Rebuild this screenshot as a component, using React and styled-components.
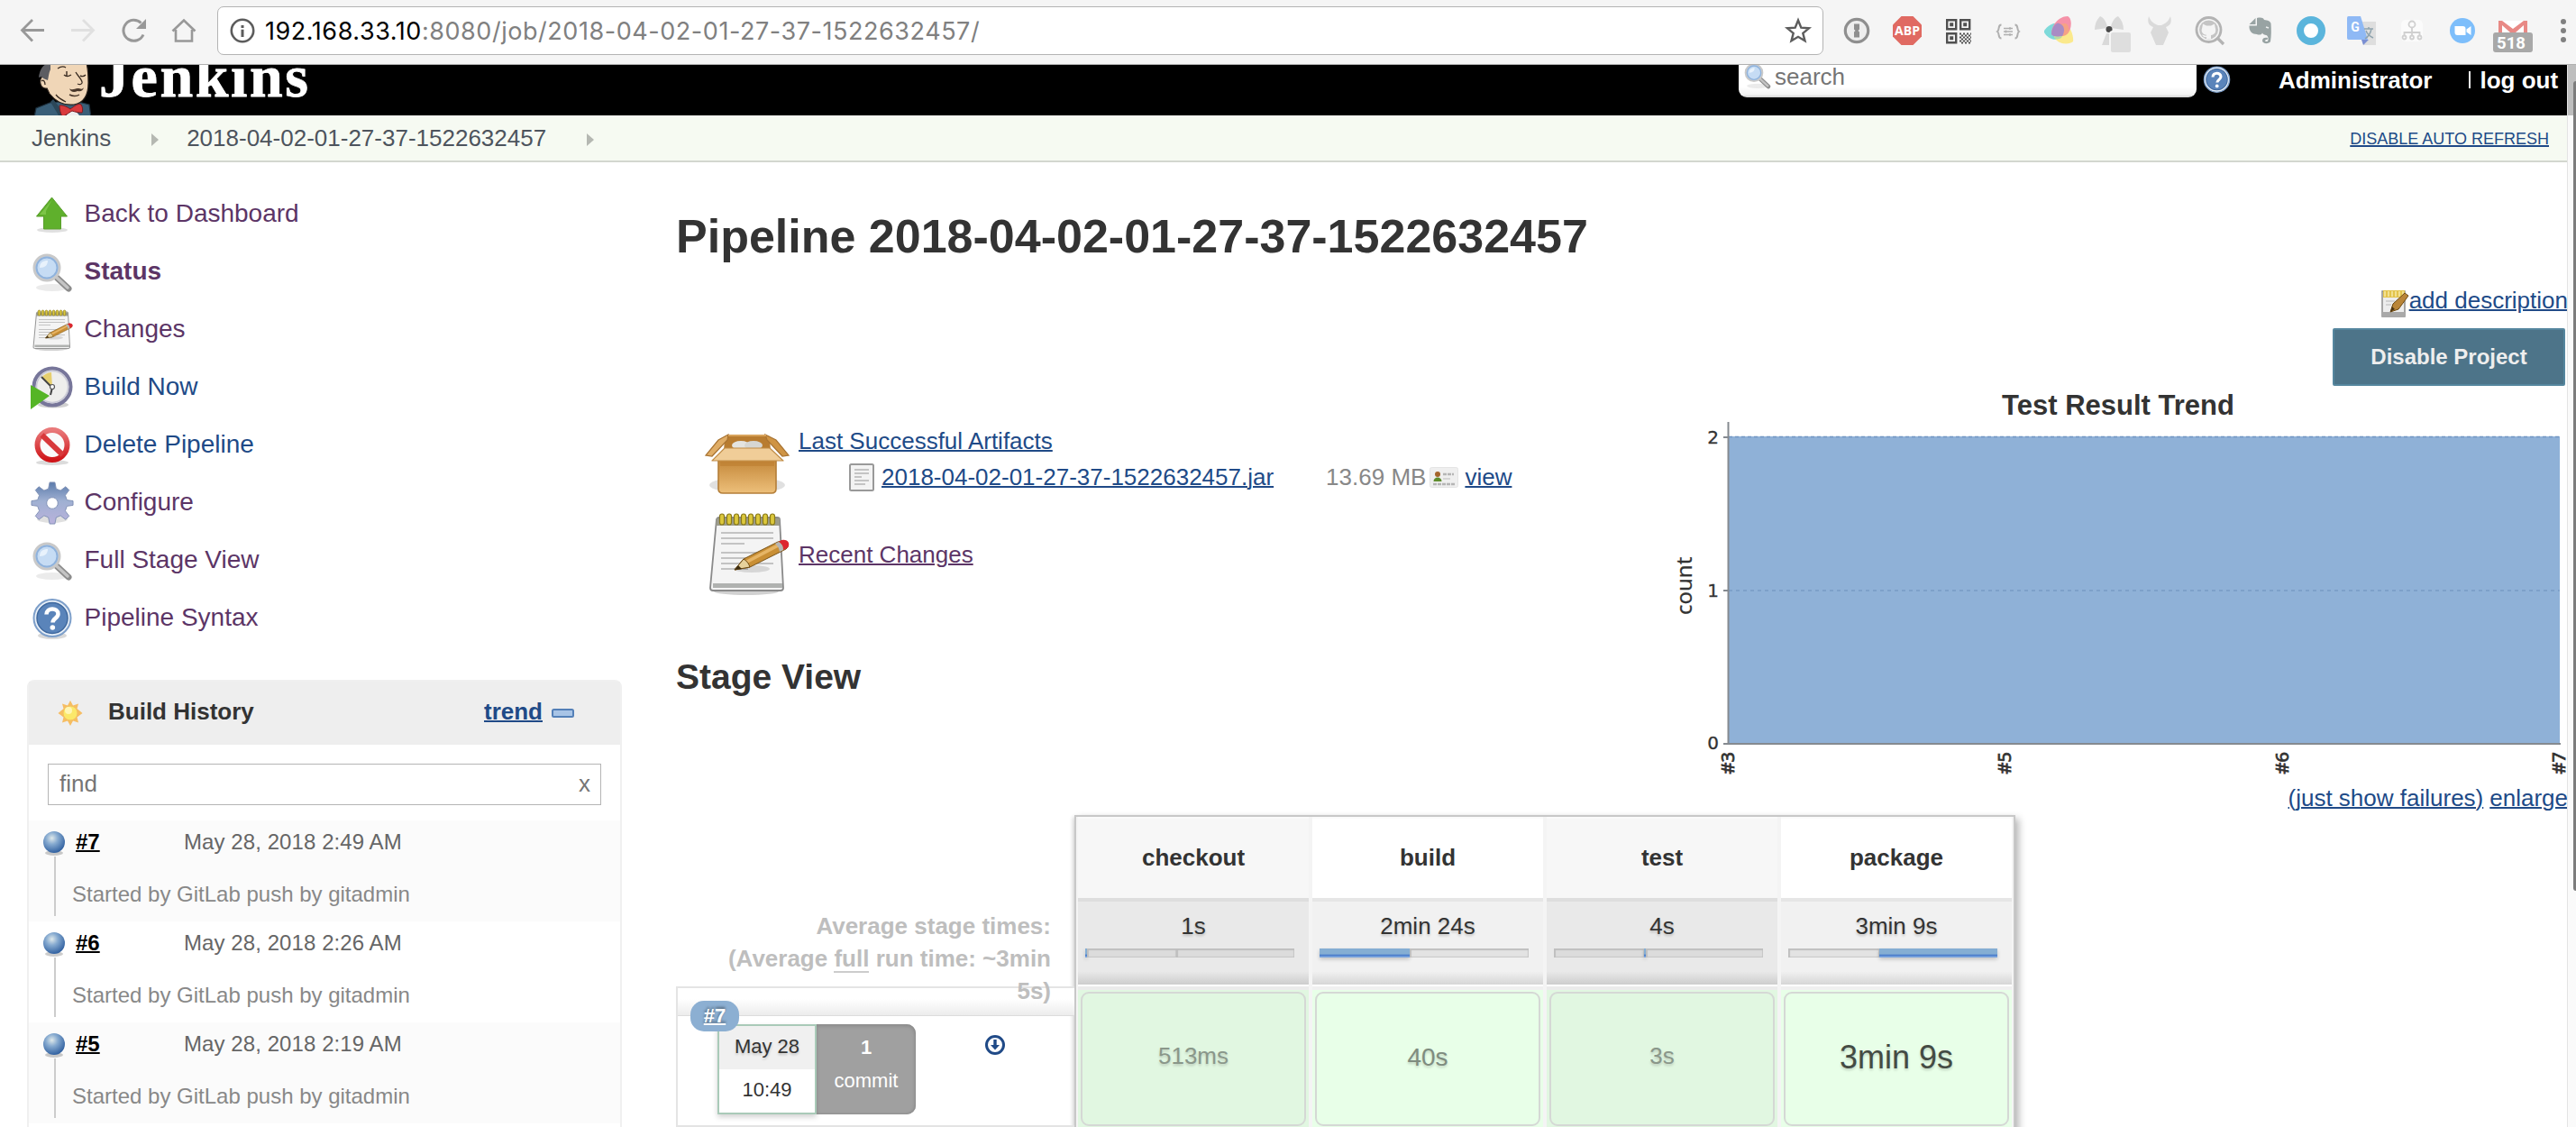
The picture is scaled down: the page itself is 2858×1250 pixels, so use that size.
import React from "react";
import styled, { createGlobalStyle } from "styled-components";

const GlobalStyle = createGlobalStyle`
  *, *::before, *::after { box-sizing: border-box; }
  html, body { margin: 0; padding: 0; background: #fff; overflow: hidden; }
  body { font-family: "Liberation Sans", Helvetica, Arial, sans-serif; font-size: 26px; color: #333; }
  svg { display: block; flex: none; overflow: visible; }
  h1, h2, p { margin: 0; }
`;

/* ---------- Browser chrome ---------- */

const Screen = styled.div`
  width: 2858px;
  height: 1250px;
  overflow: hidden;
  display: flex;
  flex-direction: column;
`;

const Toolbar = styled.div`
  flex: none;
  height: 72px;
  display: flex;
  align-items: flex-start;
  padding-left: 22px;
  background: #f5f5f5;
  border-bottom: 1px solid #b0b0b0;
`;

const NavButtons = styled.div`
  display: flex;
  gap: 28px;
  padding-top: 20px;
  margin-right: 23px;
`;

const Omnibox = styled.div`
  flex: none;
  width: 1782px;
  height: 54px;
  margin-top: 7px;
  padding: 0 12px 0 13px;
  display: flex;
  align-items: center;
  gap: 11px;
  background: #fff;
  border: 1px solid #b4b4b4;
  border-radius: 7px;
`;

const Url = styled.div`
  flex: 1;
  padding-top: 2px;
  font-family: Inter, Roboto, sans-serif;
  font-size: 27px;
  line-height: 36px;
  letter-spacing: 0.55px;
  color: #808080;
  white-space: nowrap;
  span { color: #000; }
`;

const Extensions = styled.div`
  flex: none;
  display: flex;
  gap: 24px;
  padding: 18px 0 0 21px;
`;

const Viewport = styled.div`
  flex: 1;
  min-height: 0;
  display: flex;
`;

const Page = styled.div`
  width: 2848px;
  height: 1178px;
  overflow: hidden;
`;

const ScrollTrack = styled.div`
  width: 10px;
  padding: 18px 0 0 6px;
  border-left: 1px solid #e4e4e4;
  background: linear-gradient(#bebebe 56px, #fafafa 56px);
`;

const ScrollThumb = styled.div`
  height: 898px;
  border-radius: 6px 0 0 6px;
  background: #7c7c7c;
`;

/* ---------- Jenkins header ---------- */

const Header = styled.header`
  height: 56px;
  overflow: hidden;
  display: flex;
  align-items: flex-start;
  padding-left: 30px;
  background: #000;
  color: #fff;
`;

const Brand = styled.div`
  width: 1819px;
  margin-top: -24px;
  font-family: "Liberation Serif", Georgia, serif;
  font-size: 66px;
  font-weight: bold;
  line-height: 74px;
  letter-spacing: 2.6px;
  -webkit-text-stroke: 0.8px #fff;
`;

const SearchBox = styled.div`
  width: 508px;
  height: 36px;
  padding-left: 5px;
  display: flex;
  gap: 3px;
  background: linear-gradient(#fff 24px, #f3f3f3 33px, #d9d9d9 35px);
  border-radius: 0 0 9px 9px;
  color: #757575;
  line-height: 26px;
  svg { margin-top: -4px; }
`;

const HeaderLink = styled.a`
  font-weight: bold;
  line-height: 34px;
  margin-left: ${(p) => p.$gap}px;
`;

const Divider = styled.i`
  width: 2px;
  height: 19px;
  margin: 7px 10px 0 41px;
  background: #eee;
`;

const Breadcrumbs = styled.nav`
  height: 52px;
  display: flex;
  align-items: center;
  padding: 0 20px 0 35px;
  background: #f6faf2;
  border-bottom: 2px solid #d3d7cf;
  color: #4d545d;
`;

const Crumb = styled.a`
  line-height: 48px;
`;

const CrumbArrow = styled.i`
  margin: 4px ${(p) => p.$right}px 0 45px;
  border: 7.5px solid transparent;
  border-left: 8px solid #b5b8b2;
  border-right: 0;
`;

const AutoRefresh = styled.a`
  margin-left: auto;
  padding-top: 3px;
  font-size: 18px;
  color: #204a87;
  text-decoration: underline;
  text-decoration-thickness: 2px;
`;

/* ---------- Side panel ---------- */

const Body = styled.div`
  display: flex;
`;

const SidePanel = styled.aside`
  width: 750px;
  padding: 34px 60px 0 30px;
`;

const Tasks = styled.div`
  display: flex;
  flex-direction: column;
  gap: 16px;
  padding-left: 4px;
`;

const Task = styled.a`
  height: 48px;
  display: flex;
  align-items: center;
  gap: 11.5px;
  font-size: 28px;
  line-height: 46px;
  color: ${(p) => (p.$visited ? "#5c3566" : "#204a87")};
  font-weight: ${(p) => (p.$active ? "bold" : "normal")};
  span { padding-bottom: 2px; }
`;

const HistoryPane = styled.section`
  width: 660px;
  margin-top: 44px;
  padding-bottom: 40px;
  border: 2px solid #f0f0f0;
  border-radius: 8px 8px 0 0;
`;

const HistoryHead = styled.div`
  height: 70px;
  display: flex;
  align-items: center;
  padding: 0 51px 0 30px;
  background: #eee;
  font-weight: bold;
  color: #333;
`;

const HistoryTitle = styled.span`
  flex: 1;
  padding: 0 0 3px 26px;
`;

const TrendLink = styled.a`
  margin-right: 10px;
  padding-bottom: 3px;
  color: #204a87;
  text-decoration: underline;
  text-decoration-thickness: 2px;
`;

const Finder = styled.div`
  height: 46px;
  margin: 21px 21px 17px;
  padding: 0 11px 0 12px;
  display: flex;
  justify-content: space-between;
  border: 1px solid #b5b5b5;
  color: #757575;
  line-height: 42px;
`;

const BuildRow = styled.div`
  height: 112px;
  display: grid;
  grid-template-columns: 34px 1fr;
  padding-left: 15px;
  background: ${(p) => (p.$shaded ? "#fbfbfb" : "#fff")};
  font-size: 24px;
`;

const BuildRail = styled.div`
  display: flex;
  flex-direction: column;
  padding: 10px 0 6px;
  i { flex: 1; width: 2px; margin-left: 13px; background: #ccc; }
`;

const BuildLine = styled.div`
  display: flex;
  height: 47px;
  line-height: 48px;
  color: #666;
`;

const BuildNumber = styled.a`
  width: 123px;
  padding-left: 3px;
  font-weight: bold;
  color: #000;
  text-decoration: underline;
  text-decoration-thickness: 2px;
`;

const BuildDate = styled.span`
  letter-spacing: 0.08px;
`;

const BuildCause = styled.p`
  margin: 12px 0 0 -1px;
  line-height: 46px;
  color: #888;
`;

/* ---------- Main panel ---------- */

const Main = styled.main`
  flex: 1;
  padding-top: 52px;
`;

const Title = styled.h1`
  font-size: 52px;
  line-height: 60px;
`;

const Summary = styled.div`
  height: 612px;
  display: flex;
`;

const SummaryLeft = styled.div`
  width: 1100px;
  padding-top: 174px;
`;

const SummaryRow = styled.div`
  display: flex;
  gap: 8px;
  height: 96px;
  margin: 0 0 4px 32px;
`;

const SummaryText = styled.div`
  line-height: 40px;
  padding-top: ${(p) => p.$top}px;
`;

const Link = styled.a`
  color: ${(p) => (p.$visited ? "#5c3566" : "#204a87")};
  text-decoration: underline;
  text-decoration-thickness: 2px;
`;

const FileRow = styled.div`
  display: flex;
  align-items: center;
  padding-left: 56px;
`;

const FileSize = styled.span`
  margin: 0 4px 0 58px;
  color: #888;
`;

const SectionTitle = styled.h2`
  margin-top: 67px;
  font-size: 39px;
  line-height: 44px;
`;

const Trend = styled.div`
  width: 1000px;
  margin-right: -2px;
  padding-top: 28px;
  display: flex;
  flex-direction: column;
`;

const DescriptionLink = styled.div`
  display: flex;
  justify-content: flex-end;
  height: 32px;
  line-height: 27px;
  padding-right: 1px;
  white-space: nowrap;
`;

const Button = styled.button`
  align-self: flex-end;
  width: 258px;
  height: 64px;
  margin: 12px 4px 0 0;
  padding: 0;
  background: #4d7489;
  border: 2px solid #55869e;
  border-radius: 2px;
  color: #eee;
  font: bold 24px "Liberation Sans", Arial, sans-serif;
`;

const TrendTitle = styled.div`
  margin: 4px 0 -1px;
  height: 36px;
  font-size: 31px;
  line-height: 36px;
  font-weight: bold;
  text-align: center;
`;

const TrendLinks = styled.div`
  display: flex;
  justify-content: flex-end;
  gap: 7px;
  padding-right: 1px;
  line-height: 30px;
`;

/* ---------- Stage view ---------- */

const StageView = styled.section`
  display: flex;
`;

const RunColumn = styled.div`
  width: 442px;
`;

const Averages = styled.div`
  position: relative;
  z-index: 1;
  height: 190px;
  padding: 105px 26px 0 0;
  text-align: right;
  font-weight: bold;
  line-height: 36px;
  color: #bebebe;
  span { display: block; white-space: nowrap; }
  u { text-decoration: none; border-bottom: 2px solid #ccc; display: inline-block; line-height: 28px; }
`;

const Run = styled.div`
  position: relative;
  height: 156px;
  border: 2px solid #e4e4e4;
  border-right: 0;
`;

const RunShade = styled.div`
  height: 31px;
  border-bottom: 1px solid #dcdcdc;
  background: linear-gradient(#fff 40%, #ececec);
`;

const RunBadge = styled.a`
  position: absolute;
  left: 14px;
  top: 14px;
  width: 54px;
  height: 34px;
  border-radius: 15px;
  background: #8cafd2;
  color: #fff;
  font-size: 22px;
  font-weight: bold;
  line-height: 33px;
  text-align: center;
  text-decoration: underline;
  text-decoration-thickness: 2px;
  text-shadow: 0 -2px 3px rgba(0, 0, 0, 0.4);
`;

const RunInfo = styled.div`
  display: flex;
  padding: 9px 0 0 44px;
  font-size: 22px;
`;

const RunDate = styled.div`
  width: 110px;
  height: 100px;
  border: 2px solid #a9cab8;
  box-shadow: 0 3px 6px rgba(0, 0, 0, 0.18);
  text-align: center;
  line-height: 46px;
  div:first-child { background: #f0f0f0; text-shadow: 0 2px 3px rgba(0, 0, 0, 0.2); }
  div { height: 48px; }
`;

const RunCommits = styled.div`
  width: 110px;
  height: 100px;
  padding-top: 7px;
  border-radius: 0 10px 10px 0;
  background: #a0a0a0;
  box-shadow: inset 0 2px 4px #888, inset -1px -1px 2px #919191;
  color: #fff;
  text-align: center;
  line-height: 37px;
`;

const DownloadSlot = styled.div`
  padding: 11px 0 0 76px;
`;

const StageTable = styled.div`
  width: 1044px;
  height: 380px;
  border: 2px solid #c8c8c8;
  display: grid;
  grid-template-columns: repeat(4, 260px);
  box-shadow: 4px 4px 8px rgba(0, 0, 0, 0.28), -2px 2px 4px rgba(0, 0, 0, 0.12);
`;

const Stage = styled.div`
  border: 0 solid #f4f4f4;
  border-width: 0 2px;
  text-align: center;
`;

const StageName = styled.div`
  height: 94px;
  border-top: 2px solid #fafafa;
  border-bottom: 4px solid ${(p) => (p.$odd ? "#dedede" : "#e6e6e6")};
  background: ${(p) => (p.$odd ? "#f7f7f7" : "#fff")};
  font-weight: bold;
  line-height: 86px;
`;

const StageAverage = styled.div`
  height: 92px;
  padding: 12px 0 0;
  line-height: 30px;
  background: ${(p) =>
    p.$odd
      ? "linear-gradient(#e9e9e9 84%, #cdcdcd)"
      : "linear-gradient(#f1f1f1 84%, #d6d6d6)"};
  text-shadow: 0 2px 3px rgba(0, 0, 0, 0.2);
`;

const Meter = styled.div`
  display: flex;
  width: 232px;
  height: 10px;
  margin: 10px 0 0 8px;
`;

const MeterGap = styled.i`
  height: 10px;
  flex: ${(p) => (p.$w ? `0 0 ${p.$w}px` : "1")};
  background: ${(p) => (p.$odd ? "#dcdcdc" : "#e3e3e3")};
  box-shadow: inset 2px 2px 1px #bfbfbf, inset -1px -1px 1px #c6c6c6;
`;

const MeterFill = styled.i`
  height: 10px;
  flex: 0 0 ${(p) => p.$w}px;
  background: linear-gradient(#85aed3 60%, #4a7ccb 75%, #7aa4de 90%);
  box-shadow: 0 2px 4px rgba(0, 0, 0, 0.2);
`;

const StageRun = styled.div`
  border-top: 2px solid #fff;
  height: 190px;
  padding: 6px 3px 0;
  background: linear-gradient(
    ${(p) => (p.$odd ? "#ebebeb" : "#f0f0f0")} 4px,
    ${(p) => (p.$odd ? "#e1f7e1" : "#e8ffe8")} 4px
  );
`;

const StageRunCell = styled.div`
  height: 149px;
  border: 2px solid #d5d8d5;
  border-radius: 9px;
  font-size: ${(p) => p.$size}px;
  line-height: ${(p) => (p.$odd ? 139 : 141)}px;
  color: ${(p) => (p.$strong ? "#444b44" : p.$odd ? "#8a978a" : "#7f8c7f")};
  text-shadow: 0 2px 3px rgba(0, 0, 0, 0.18);
`;

/* ---------- Toolbar icons ---------- */

const BackIcon = () => (
  <svg width="28" height="28" fill="none" stroke="#989898" strokeWidth="2.8">
    <path d="M27 13.5H2.5M14 2L2.5 13.5 14 25.5" />
  </svg>
);
const ForwardIcon = () => (
  <svg width="28" height="28" fill="none" stroke="#e0e0e0" strokeWidth="2.8">
    <path d="M1 13.5h24.5M14 2l11.500 11.500L14 25.500" />
  </svg>
);
const ReloadIcon = () => (
  <svg width="28" height="28">
    <path d="M22.500 5.500A11.500 11.500 0 1 0 25 18.500" fill="none" stroke="#989898" strokeWidth="3" />
    <path d="M28 1v11H17z" fill="#989898" />
  </svg>
);
const HomeIcon = () => (
  <svg width="28" height="28" fill="none" stroke="#989898" strokeWidth="2.600">
    <path d="M5 13v12.500h18V13M1.500 14.500L14 2.500l12.500 12" />
  </svg>
);
const InfoIcon = () => (
  <svg width="28" height="28">
    <circle cx="14" cy="14" r="12.200" fill="none" stroke="#5c5c5c" strokeWidth="2.600" />
    <path d="M12.500 8h3v3h-3zM12.500 12.800h3V21h-3z" fill="#5c5c5c" />
  </svg>
);
const StarIcon = () => (
  <svg width="30" height="30" fill="none" stroke="#5c5c5c" strokeWidth="2.400">
    <path d="M15 3.500l3.300 8.200 8.700.6-6.700 5.600 2.200 8.400L15 21.800l-7.500 4.500 2.200-8.400L3 12.300l8.700-.6z" />
  </svg>
);

const ExtensionIcons = () => (
  <Extensions>
    <svg width="32" height="32">
      <circle cx="16" cy="16" r="12.700" fill="#eee" stroke="#8f8f8f" strokeWidth="3.200" />
      <path d="M13 8.500h6v6l-1.500 1.500 1.500 1.500v6h-6v-6l1.500-1.500-1.500-1.500z" fill="#8f8f8f" />
    </svg>
    <svg width="32" height="32">
      <path d="M9.500 0h13L32 9.500v13L22.500 32h-13L0 22.500v-13z" fill="#e06a62" />
      <text x="16" y="21" textAnchor="middle" fontFamily="Open Sans" fontWeight="bold" fontSize="14" fill="#fff">ABP</text>
    </svg>
    <svg width="32" height="32" fill="none" stroke="#505050" strokeWidth="2.400">
      <path d="M4.200 4.200h10v10h-10zM19.200 4.200h10v10h-10zM4.200 19.200h10v10h-10z" />
      <path d="M7.200 7.200h4v4h-4zM22.200 7.200h4v4h-4zM7.200 22.200h4v4h-4z" fill="#505050" stroke="none" />
      <path d="M18 19.500h13M18 23.500h13M18 27.500h13" strokeDasharray="2 2" strokeWidth="2" />
      <path d="M20 21.500h11M20 25.500h11M20 29.500h11" strokeDasharray="2 2" strokeWidth="2" />
    </svg>
    <svg width="32" height="32" fill="none" stroke="#b0b0b0" strokeWidth="2">
      <path d="M8.500 9.500c-4.500 0-1.500 5.500-4.500 7.500 3 2 0 7.500 4.500 7.500M23.500 9.500c4.500 0 1.500 5.500 4.500 7.500-3 2 0 7.500-4.500 7.500" />
      <path d="M11 13.500h10M11 17h10M11 20.500h10M18 12v3M13.500 15.500v3M18 19v3" strokeWidth="1.300" />
    </svg>
    <svg width="32" height="32">
      <path d="M0 16C4 9 13 6 18 8c5 3 5 12 0 16-6 4-14 1-18-6z" fill="#7edada" />
      <path d="M11 22C12 14 18 8 24 8c5 4 9 14 8 20-4 4-18 4-21-6z" fill="#fbe98c" />
      <path d="M8 20C8 8 18 0 26 0c5 2 5 14 0 19-6 5-16 4-18 1z" fill="#f592a8" />
      <path d="M18 9c2-1 4-1 6-1 3 2 4 6 3 10-2 3-5 4-8 4 4-4 4-10-1-13z" fill="#f5a285" />
      <path d="M8 20c0-6 3-11 7-12.500C22 9 24 15 20 22c-4 1.500-10 1-12-2z" fill="#a98cc4" />
      <path d="M11 22c3 1 6 .8 9 0 0 2-4 4-8 3.500z" fill="#b4dca6" />
    </svg>
    <svg width="32" height="32">
      <path d="M14 13L0 15C0 9 2 4 6 0c4 1 8 8 8 13zM18 13l14 2c0-6-2-11-6-15-4 1-8 8-8 13zM13 19h6l5 13H8z" fill="#d9d9d9" />
      <circle cx="16" cy="14.500" r="3.500" fill="#4a4a4a" />
      <rect x="17" y="17" width="24" height="24" rx="3" fill="#dedede" stroke="#f5f5f5" strokeWidth="2" />
    </svg>
    <svg width="32" height="32">
      <path d="M4 0c2 5 4 7 8 9l2 1h4l2-1c4-2 6-4 8-9 2 7 0 10-5 12l3 6-6 14h-8L6 18l3-6C4 10 2 7 4 0z" fill="#dadada" />
    </svg>
    <svg width="32" height="32">
      <circle cx="14.500" cy="15" r="13.500" fill="none" stroke="#b3b3b3" strokeWidth="2.800" />
      <circle cx="14.500" cy="15" r="10.500" fill="#c4c4c4" />
      <path d="M24 24l7 7" stroke="#b3b3b3" strokeWidth="3.200" />
      <path d="M8 8.500l4 2h5l4-2 .8 4.500c1.500 5-1 7.500-4.800 8V25h-5v-2c-3 1-4-1-5-2.500 2 0 3 1.500 5 1v-.7C8 20 5.500 17.500 7.200 13z" fill="#f4f4f4" />
    </svg>
    <svg width="32" height="32">
      <path d="M3.500 9l7-7v7zM12 2c4-1 7-.5 8 2 4 .5 7 1.500 7.500 4 .5 7 .5 14-.5 20-1.500 3-9 3-9-1 0-3 3-4 6-3l-.5 2c-2 0-3 .5-2 2h2c2-2 1-6-1-7-2 0-4-1-4.500-2.500-1 2.500-4.500 2.500-6 1.500-5 0-9-3-8.500-9.500H12z" fill="#98a3a3" />
      <path d="M22 12l3 1" stroke="#eef0f0" strokeWidth="1.500" />
    </svg>
    <svg width="32" height="32">
      <circle cx="16" cy="16" r="12" fill="#fff" stroke="#5bb5dc" strokeWidth="8" />
    </svg>
    <svg width="32" height="32">
      <path d="M14 6h18v26H18z" fill="#dedede" />
      <path d="M16 26h8l-6 6z" fill="#7a8fd2" />
      <path d="M1.500 0H15l8 26H1.500Q0 26 0 24V2Q0 0 1.500 0z" fill="#8fb9f5" />
      <text x="9" y="17" textAnchor="middle" fontFamily="Roboto" fontWeight="bold" fontSize="14" fill="#fff">G</text>
      <path d="M19 14h10M24 12v2M27 14c-1 5-4 9-7 11M21 16c1 3 4 6 8 8" fill="none" stroke="#90a4ae" strokeWidth="1.500" />
    </svg>
    <svg width="32" height="32">
      <rect x="4" y="4" width="24" height="24" rx="5" fill="#fbfbfb" />
      <g fill="none" stroke="#d0d0d0" strokeWidth="1.800">
        <circle cx="16" cy="9" r="3.500" />
        <path d="M16 12v10M7.500 22v-4h17v4" />
        <circle cx="7.500" cy="23.500" r="2" /><circle cx="16" cy="23.500" r="2" /><circle cx="24.500" cy="23.500" r="2" />
      </g>
    </svg>
    <svg width="32" height="32">
      <circle cx="16" cy="16" r="14" fill="#7dbefb" />
      <path d="M9 11h9q3 0 3 3v7h-9q-3 0-3-3zM22 14.500l5-3.500v10l-5-3.500z" fill="#fff" transform="translate(-1.500 0)" />
    </svg>
    <svg width="32" height="32">
      <path d="M0 5h32v13H0z" fill="#fff" />
      <path d="M0 18V5h4l12 9L28 5h4v13h-4v-8L19 18h-6L4 10v8z" fill="#e88985" />
      <rect x="-6" y="18" width="44" height="22" rx="3" fill="#a8a8a8" />
      <text x="14" y="36" textAnchor="middle" fontFamily="Roboto" fontWeight="bold" fontSize="18.500" fill="#fff">518</text>
    </svg>
    <svg width="32" height="32" fill="#808080">
      <circle cx="16" cy="6" r="3" /><circle cx="16" cy="16" r="3" /><circle cx="16" cy="26" r="3" />
    </svg>
  </Extensions>
);

/* ---------- Jenkins icons ---------- */

const ButlerLogo = () => (
  <svg width="80" height="56" viewBox="30 72 80 56">
    <path d="M38 130l2-10 15-6 10-1 22 0 12 3 2 14z" fill="#3a5f78" stroke="#1d2f3c" strokeWidth="1.200" />
    <path d="M56 113l9 15h8l-14-18z" fill="#2b4759" />
    <path d="M54 70h42c2 8 2 16 2 22 0 12-4 22-16 24-10 1-20-3-27-12l-3-6c-7 1-9-8-6-12 2-3 5-2 6 1z" fill="#f0d6b7" stroke="#2a211b" strokeWidth="1.200" />
    <path d="M56 70c-7 0-12 6-13 16 2-1 4-1 5 1l5 2c1-4 1-8 3-12z" fill="#5c5d62" />
    <path d="M46 90c2-2 4 0 4 4M62 105c3 4 7 6 11 8M84 80c2 4 8 9 7 12-1 2-3 2-5 1M64 76c3-2 6-3 9-1" fill="none" stroke="#3a2c22" strokeWidth="1.300" />
    <path d="M71 83c2 2 5 2 8 0M89 84c2 1 4 1 6-1M74 79v6" fill="none" stroke="#3a2c22" strokeWidth="1.400" />
    <path d="M77 98c3 3 6 0 9 0s5 2 7-1c-1 4-4 5-7 4-4 2-8 1-9-3z" fill="#4a382b" />
    <path d="M77 105c4 2 8 2 11 0" stroke="#4a382b" strokeWidth="1.500" fill="none" />
    <path d="M75 124l7-3 6 7H74z" fill="#eee" />
    <path d="M66 117c4-1 9 2 12 4 4-3 9-7 12-5 2 3 2 7 1 9-4 0-8-1-11-2-4 2-8 6-11 6-2-3-3-8-3-12z" fill="#d93a3d" stroke="#7d1c1f" strokeWidth="1" />
  </svg>
);

const Magnifier = ({ size = 48 }) => (
  <svg width={size} height={size} viewBox="0 0 48 48">
    <ellipse cx="24" cy="41" rx="18" ry="4" fill="#000" opacity=".08" />
    <path d="M28 29l14 13" stroke="#8c8c8c" strokeWidth="7" strokeLinecap="round" />
    <path d="M28 29l13 12" stroke="#c4c4c4" strokeWidth="3.500" strokeLinecap="round" />
    <circle cx="18" cy="19" r="14" fill="#b9d3ef" stroke="#c9c9c9" strokeWidth="3" />
    <circle cx="18" cy="19" r="11.500" fill="#c6dcf4" stroke="#8fb2dc" strokeWidth="2" />
    <path d="M10 19c0-6 4-8 9-8 0 5-3 8-9 8z" fill="#e8f2fc" />
  </svg>
);

const UpArrow = () => (
  <svg width="48" height="48">
    <ellipse cx="24" cy="41" rx="17" ry="3" fill="#000" opacity=".12" />
    <path d="M23.500 5L40.500 26h-7v14h-19V26H6.500z" fill="#5fb02c" stroke="#5a9e2c" strokeWidth="1" strokeLinejoin="round" />
    <path d="M23.500 8L10 24h7v-4z" fill="#8fd35c" opacity=".6" />
  </svg>
);

const Notepad = ({ size = 48 }) => (
  <svg width={size} height={size} viewBox="0 0 96 96">
    <ellipse cx="46" cy="90" rx="36" ry="4" fill="#000" opacity=".18" />
    <path d="M13 10q1-2 3-2h64q3 0 3 2l4 76q0 3-3 3H9q-3 0-3-3z" fill="#f4f4f4" stroke="#8a8a8a" strokeWidth="1.800" />
    <path d="M13 9h70v8H12.500z" fill="#9c9c8c" />
    <path d="M9 81h77v5H9z" fill="#b0b2b0" />
    <g fill="#dcc83c" stroke="#8a7a18" strokeWidth="1.200">
      {[17, 25, 33, 41, 49, 57, 65, 73].map((x) => (
        <rect key={x} x={x - 0.5} y="4" width="5" height="12" rx="2.500" />
      ))}
    </g>
    <path d="M18 25h58M18 31h58M18 37h26M18 47h56M18 53h40M18 59h58M18 65h30" stroke="#c3c3c3" strokeWidth="2" />
    <ellipse cx="52" cy="65" rx="20" ry="4" fill="#000" opacity=".12" />
    <path d="M33 66l10-12 38-19q7-2 10 1 3 4-1 7L50 63z" fill="#c98f35" stroke="#7a5418" strokeWidth="1" />
    <path d="M45 56l38-20 2 3-38 20z" fill="#e6b566" />
    <path d="M33 66l10-12c4 2 6 6 7 9z" fill="#e6d19c" stroke="#6e4a12" strokeWidth="1" />
    <path d="M33 66l4-5 4 4z" fill="#3c2c10" />
    <path d="M82 35l3-2q6-1 8 3 1 4-2 6l-4 2q0-6-5-9z" fill="#dd2630" />
    <path d="M78 37l4-2q5 3 5 9l-4 2q-1-6-5-9z" fill="#b5b5b5" />
  </svg>
);

const ClockPlay = () => (
  <svg width="48" height="48">
    <ellipse cx="25" cy="43" rx="17" ry="3.500" fill="#000" opacity=".18" />
    <circle cx="24" cy="23" r="20.500" fill="#eeeeec" stroke="#77769a" strokeWidth="4" />
    <circle cx="24" cy="23" r="17.500" fill="none" stroke="#c9c9d6" strokeWidth="1.500" />
    <path d="M24 23L12 13a16 16 0 0 1 11-6z" fill="#e6cf6e" />
    <path d="M12 12l12 12-2 8" fill="none" stroke="#444" strokeWidth="2" />
    <circle cx="24" cy="23" r="2.500" fill="#fff" stroke="#555" strokeWidth="1.200" />
    <path d="M0 21l21 12L0 48z" fill="#55b526" />
  </svg>
);

const NoEntry = () => (
  <svg width="48" height="48">
    <defs>
      <linearGradient id="noEntry" x1="0" y1="0" x2="0" y2="1">
        <stop offset="0" stopColor="#e9797a" />
        <stop offset="1" stopColor="#cf1519" />
      </linearGradient>
    </defs>
    <ellipse cx="24" cy="43" rx="18" ry="3" fill="#000" opacity=".14" />
    <circle cx="24" cy="23.500" r="16.500" fill="#fafafa" stroke="url(#noEntry)" strokeWidth="6" />
    <path d="M12.500 12.500l23 22" stroke="#d8393b" strokeWidth="6" />
  </svg>
);

const Gear = () => (
  <svg width="48" height="48">
    <defs>
      <linearGradient id="gear" x1="0" y1="0" x2="0" y2="1">
        <stop offset="0" stopColor="#5b7bab" />
        <stop offset=".45" stopColor="#9fb0d2" />
        <stop offset="1" stopColor="#b9b2dc" />
      </linearGradient>
    </defs>
    <ellipse cx="24" cy="42" rx="17" ry="4" fill="#000" opacity=".12" />
    <path
      transform="translate(24 24) scale(.96) translate(-24 -24)"
      fill="url(#gear)"
      stroke="#7f90b5"
      strokeWidth="1"
      strokeLinejoin="round"
      fillRule="evenodd"
      d="M21 0h6l1.500 7.500 5 2 6-4.500 4 4-4.500 6 2 5.500 7 1v5l-7 1-2 5.500 4.500 6-4 4-6-4.500-5 2L27 48h-6l-1.500-7.500-5-2-6 4.500-4-4L9 33l-2-5.500-7-1v-5l7-1L9 15 4.500 9l4-4 6 4.500 5-2zM24 17.500a6.500 6.500 0 1 0 .01 0z"
    />
  </svg>
);

const HelpIcon = ({ size = 48 }) => (
  <svg width={size} height={size} viewBox="0 0 48 48">
    <ellipse cx="24" cy="43" rx="16" ry="4" fill="#000" opacity=".15" />
    <circle cx="24" cy="23.500" r="20.500" fill="#e9f0f8" stroke="#7d9fca" strokeWidth="2" />
    <circle cx="24" cy="23.500" r="17" fill="#5a84ba" stroke="#3f699f" strokeWidth="1.500" />
    <path d="M17.500 19.500c0-8 13-8 13-.5 0 4.500-6 5-6 9.500" fill="none" stroke="#fff" strokeWidth="4.500" />
    <circle cx="24.300" cy="34" r="2.800" fill="#fff" />
  </svg>
);

const Sun = () => (
  <svg width="32" height="32">
    <path d="M16 2l3 5.500 6-2L23.500 11l6 5-6 4.500 1.500 6-6-2L16 30l-3-5.500-6 2 1.500-6-6-4.500 6-5L7 5.500l6 2z" fill="#f6bd62" />
    <circle cx="16" cy="16" r="8" fill="#fbe86a" stroke="#f3c060" strokeWidth="1" />
    <circle cx="14" cy="13" r="4" fill="#fff6b5" />
  </svg>
);

const Collapse = () => (
  <svg width="25" height="10">
    <rect x="1" y="1" width="23" height="8" rx="1.500" fill="#a8c4e6" stroke="#5480b8" strokeWidth="2" />
  </svg>
);

const Ball = () => (
  <svg width="26" height="30">
    <defs>
      <radialGradient id="ball" cx=".4" cy=".32" r=".7">
        <stop offset="0" stopColor="#dfe9ea" />
        <stop offset=".4" stopColor="#86aad0" />
        <stop offset="1" stopColor="#2f5f9f" />
      </radialGradient>
    </defs>
    <ellipse cx="13" cy="26" rx="10" ry="3" fill="#000" opacity=".2" />
    <circle cx="13" cy="14" r="12" fill="url(#ball)" />
  </svg>
);

const PackageBox = () => (
  <svg width="96" height="96" viewBox="782 466 96 96">
    <defs>
      <linearGradient id="carton" x1="0" y1="0" x2="0" y2="1">
        <stop offset="0" stopColor="#c4883a" />
        <stop offset="1" stopColor="#edbf7a" />
      </linearGradient>
    </defs>
    <ellipse cx="829" cy="538" rx="42" ry="9" fill="#000" opacity=".12" />
    <path d="M804 484l4-1h42l4 1 1 18h-52z" fill="#b87c30" />
    <ellipse cx="822" cy="494" rx="10" ry="5" fill="#e4e4e0" />
    <ellipse cx="836" cy="494" rx="10" ry="5" fill="#d6d6d2" />
    <path d="M808 482l-11 6-14 17 7 1 17-18z" fill="#e0ad66" stroke="#a87332" strokeWidth="1.200" />
    <path d="M849 482l12 6 14 17-7 1-17-18z" fill="#cf9444" stroke="#a87332" strokeWidth="1.200" />
    <path d="M797 510h64v32q0 5-5 5h-54q-5 0-5-5z" fill="url(#carton)" stroke="#b47e38" strokeWidth="1.600" />
    <path d="M804 497h50l15 14h-79z" fill="#f0cd98" stroke="#c08c46" strokeWidth="1.200" strokeLinejoin="round" />
    <path d="M799 512h60v5h-60z" fill="#b9792b" opacity=".5" />
    <path d="M808 483h42" stroke="#d8a35c" strokeWidth="2" />
  </svg>
);

const Doc = () => (
  <svg width="28" height="31">
    <rect x="1" y="1" width="26" height="29" rx="1.500" fill="#f3f3f3" stroke="#999" strokeWidth="2" />
    <path d="M6 7h16M6 11h16M6 15h8M6 19h16M6 23h12" stroke="#c4c4c4" strokeWidth="2" />
  </svg>
);

const Card = () => (
  <svg width="32" height="24">
    <rect x="0.500" y="1.500" width="31" height="22" rx="2" fill="#efefef" stroke="#e4e4e4" />
    <circle cx="9" cy="9" r="3" fill="#a5652d" />
    <path d="M4.500 17c0-6 9-6 9 0z" fill="#5f8d2e" />
    <path d="M15 9h12M4 20h24" stroke="#b5b5b5" strokeWidth="2.500" strokeDasharray="4 1" />
    <path d="M15 14h8" stroke="#d5d5d5" strokeWidth="2" />
  </svg>
);

const NoteSmall = () => (
  <svg width="32" height="32">
    <path d="M2 3h25v28H2z" fill="#ededed" stroke="#8c8c8c" strokeWidth="1.500" />
    <path d="M2 26h25v5H2z" fill="#a9a9a9" />
    <path d="M3 2h24v8H3z" fill="#e3c44c" />
    <path d="M5 3v6M9 3v6M13 3v6M17 3v6M21 3v6M25 3v6" stroke="#f7e9a8" strokeWidth="1.500" />
    <path d="M6 14h10M6 18h6" stroke="#c9c9c9" strokeWidth="1.500" />
    <path d="M11 26l3-9L27 5l4 3-11 15z" fill="#b98538" stroke="#6e4a12" strokeWidth="1" />
    <path d="M11 26l2-6 3 3z" fill="#4b3513" />
  </svg>
);

const DownloadIcon = () => (
  <svg width="24" height="24">
    <circle cx="12" cy="12" r="9.500" fill="none" stroke="#204a87" strokeWidth="3" />
    <path d="M10.300 6h3.400v6H17l-5 5.500L7 12h3.300z" fill="#204a87" />
  </svg>
);

const TrendChart = () => (
  <svg width="998" height="403" viewBox="1850 467 998 403" fontFamily="Noto Sans, sans-serif" fill="#333">
    <rect x="1918" y="484" width="922" height="340" fill="#8fb1d7" />
    <path d="M1918 484.500h922" stroke="#6f95c2" strokeWidth="1.500" strokeDasharray="4 3" />
    <path d="M1918 655h922" stroke="#789bc5" strokeWidth="1.500" strokeDasharray="4 4" />
    <path d="M1917.500 468v357M1912 485h5M1912 655h5M1912 825h929" fill="none" stroke="#858a90" strokeWidth="2" />
    <g fontFamily="DejaVu Sans" fontSize="20" textAnchor="end" stroke="#333" strokeWidth=".3">
      <text x="1907" y="492">2</text>
      <text x="1907" y="662">1</text>
      <text x="1907" y="831">0</text>
    </g>
    <text transform="translate(1877 682) rotate(-90)" fontSize="24" stroke="#333" strokeWidth=".2">count</text>
    {[["#3", 1924], ["#5", 2231], ["#6", 2539], ["#7", 2846]].map(([label, x]) => (
      <text key={label} transform={`translate(${x} 858.500) rotate(-90)`} fontSize="20" stroke="#333" strokeWidth=".8">
        {label}
      </text>
    ))}
  </svg>
);

/* ---------- Data ---------- */

const tasks = [
  { label: "Back to Dashboard", icon: <UpArrow />, visited: true },
  { label: "Status", icon: <Magnifier />, visited: true, active: true },
  { label: "Changes", icon: <Notepad />, visited: true },
  { label: "Build Now", icon: <ClockPlay /> },
  { label: "Delete Pipeline", icon: <NoEntry /> },
  { label: "Configure", icon: <Gear />, visited: true },
  { label: "Full Stage View", icon: <Magnifier />, visited: true },
  { label: "Pipeline Syntax", icon: <HelpIcon />, visited: true },
];

const builds = [
  { id: "#7", date: "May 28, 2018 2:49 AM" },
  { id: "#6", date: "May 28, 2018 2:26 AM" },
  { id: "#5", date: "May 28, 2018 2:19 AM" },
];

const stages = [
  { name: "checkout", avg: "1s", before: 0, fill: 2, rest: 99, run: "513ms", size: 26 },
  { name: "build", avg: "2min 24s", before: 0, fill: 100, run: "40s", size: 28 },
  { name: "test", avg: "4s", before: 100, fill: 2, run: "3s", size: 26 },
  { name: "package", avg: "3min 9s", before: 101, fill: 131, run: "3min 9s", size: 36, strong: true },
];

export default function App() {
  return (
    <Screen>
      <GlobalStyle />
      <Toolbar>
        <NavButtons>
          <BackIcon />
          <ForwardIcon />
          <ReloadIcon />
          <HomeIcon />
        </NavButtons>
        <Omnibox>
          <InfoIcon />
          <Url>
            <span>192.168.33.10</span>:8080/job/2018-04-02-01-27-37-1522632457/
          </Url>
          <StarIcon />
        </Omnibox>
        <ExtensionIcons />
      </Toolbar>
      <Viewport>
        <Page>
          <Header>
            <ButlerLogo />
            <Brand>Jenkins</Brand>
            <SearchBox>
              <Magnifier size={32} />
              search
            </SearchBox>
            <svg width="6" height="1" />
            <HelpIcon size={33} />
            <HeaderLink $gap={52}>Administrator</HeaderLink>
            <Divider />
            <HeaderLink $gap={0}>log out</HeaderLink>
          </Header>
          <Breadcrumbs>
            <Crumb>Jenkins</Crumb>
            <CrumbArrow $right={31} />
            <Crumb>2018-04-02-01-27-37-1522632457</Crumb>
            <CrumbArrow $right={0} />
            <AutoRefresh>DISABLE AUTO REFRESH</AutoRefresh>
          </Breadcrumbs>
          <Body>
            <SidePanel>
              <Tasks>
                {tasks.map((t) => (
                  <Task key={t.label} $visited={t.visited} $active={t.active}>
                    {t.icon}
                    <span>{t.label}</span>
                  </Task>
                ))}
              </Tasks>
              <HistoryPane>
                <HistoryHead>
                  <Sun />
                  <HistoryTitle>Build History</HistoryTitle>
                  <TrendLink>trend</TrendLink>
                  <Collapse />
                </HistoryHead>
                <Finder>
                  <span>find</span>
                  <span>x</span>
                </Finder>
                {builds.map((b, i) => (
                  <BuildRow key={b.id} $shaded={i % 2 === 0}>
                    <BuildRail>
                      <Ball />
                      <i />
                    </BuildRail>
                    <div>
                      <BuildLine>
                        <BuildNumber>{b.id}</BuildNumber>
                        <BuildDate>{b.date}</BuildDate>
                      </BuildLine>
                      <BuildCause>Started by GitLab push by gitadmin</BuildCause>
                    </div>
                  </BuildRow>
                ))}
              </HistoryPane>
            </SidePanel>
            <Main>
              <Title>Pipeline 2018-04-02-01-27-37-1522632457</Title>
              <Summary>
                <SummaryLeft>
                  <SummaryRow>
                    <PackageBox />
                    <SummaryText $top={3}>
                      <Link>Last Successful Artifacts</Link>
                      <FileRow>
                        <Doc />
                        <svg width="8" height="1" />
                        <Link>2018-04-02-01-27-37-1522632457.jar</Link>
                        <FileSize>13.69 MB</FileSize>
                        <Card />
                        <svg width="7" height="1" />
                        <Link>view</Link>
                      </FileRow>
                    </SummaryText>
                  </SummaryRow>
                  <SummaryRow>
                    <Notepad size={96} />
                    <SummaryText $top={29}>
                      <Link $visited>Recent Changes</Link>
                    </SummaryText>
                  </SummaryRow>
                  <SectionTitle>Stage View</SectionTitle>
                </SummaryLeft>
                <Trend>
                  <DescriptionLink>
                    <NoteSmall />
                    <Link>add description</Link>
                  </DescriptionLink>
                  <Button>Disable Project</Button>
                  <TrendTitle>Test Result Trend</TrendTitle>
                  <TrendChart />
                  <TrendLinks>
                    <Link>(just show failures)</Link>
                    <Link>enlarge</Link>
                  </TrendLinks>
                </Trend>
              </Summary>
              <StageView>
                <RunColumn>
                  <Averages>
                    <span>Average stage times:</span>
                    <span>
                      (Average <u>full</u> run time: ~3min
                    </span>
                    <span>5s)</span>
                  </Averages>
                  <Run>
                    <RunShade />
                    <RunInfo>
                      <RunDate>
                        <div>May 28</div>
                        <div>10:49</div>
                      </RunDate>
                      <RunCommits>
                        <b>1</b>
                        <div>commit</div>
                      </RunCommits>
                      <DownloadSlot>
                        <DownloadIcon />
                      </DownloadSlot>
                    </RunInfo>
                    <RunBadge>#7</RunBadge>
                  </Run>
                </RunColumn>
                <StageTable>
                  {stages.map((s, i) => {
                    const odd = i % 2 === 0;
                    return (
                      <Stage key={s.name}>
                        <StageName $odd={odd}>{s.name}</StageName>
                        <StageAverage $odd={odd}>
                          {s.avg}
                          <Meter>
                            {s.before > 0 && <MeterGap $odd={odd} $w={s.before} />}
                            <MeterFill $w={s.fill} />
                            {s.rest && <MeterGap $odd={odd} $w={s.rest} />}
                            {s.name !== "package" && <MeterGap $odd={odd} />}
                          </Meter>
                        </StageAverage>
                        <StageRun $odd={odd}>
                          <StageRunCell $odd={odd} $size={s.size} $strong={s.strong}>
                            {s.run}
                          </StageRunCell>
                        </StageRun>
                      </Stage>
                    );
                  })}
                </StageTable>
              </StageView>
            </Main>
          </Body>
        </Page>
        <ScrollTrack>
          <ScrollThumb />
        </ScrollTrack>
      </Viewport>
    </Screen>
  );
}
